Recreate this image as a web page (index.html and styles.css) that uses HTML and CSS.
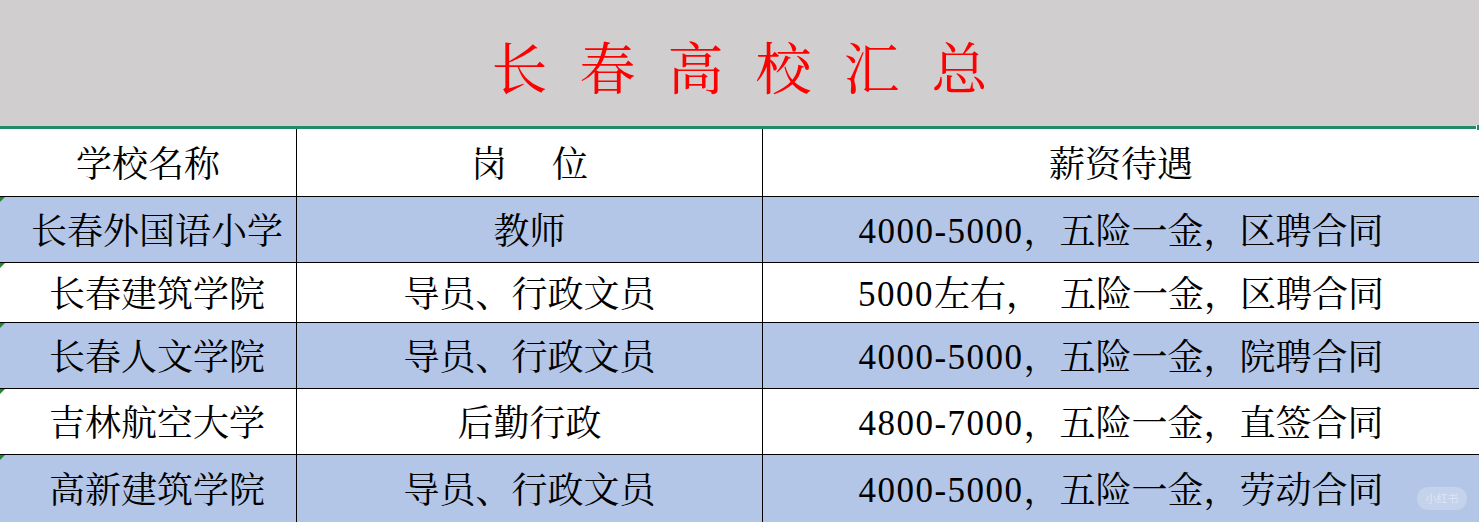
FILE: index.html
```html
<!DOCTYPE html>
<html lang="zh-CN">
<head>
<meta charset="utf-8">
<title>长春高校汇总</title>
<link rel="stylesheet" href="styles.css">
</head>
<body>
<div class="sheet">
  <div class="title-band">
    <h1 class="title">长春高校汇总</h1>
    <span class="handle"></span>
  </div>
  <div class="table">
    <div class="row head">
      <div class="cell c1">学校名称</div>
      <div class="cell c2">岗&nbsp;&nbsp;&nbsp;&nbsp;&nbsp;位</div>
      <div class="cell c3">薪资待遇</div>
    </div>
    <div class="row blue h66">
      <div class="cell c1 data">长春外国语小学</div>
      <div class="cell c2">教师</div>
      <div class="cell c3"><span class="num">4000-5000</span>，五险一金，区聘合同</div>
    </div>
    <div class="row h60">
      <div class="cell c1 data">长春建筑学院</div>
      <div class="cell c2">导员、行政文员</div>
      <div class="cell c3"><span class="num">5000</span>左右，&nbsp;&nbsp;五险一金，区聘合同</div>
    </div>
    <div class="row blue h66">
      <div class="cell c1 data">长春人文学院</div>
      <div class="cell c2">导员、行政文员</div>
      <div class="cell c3"><span class="num">4000-5000</span>，五险一金，院聘合同</div>
    </div>
    <div class="row h66">
      <div class="cell c1 data">吉林航空大学</div>
      <div class="cell c2">后勤行政</div>
      <div class="cell c3"><span class="num">4800-7000</span>，五险一金，直签合同</div>
    </div>
    <div class="row blue last">
      <div class="cell c1 data">高新建筑学院</div>
      <div class="cell c2">导员、行政文员</div>
      <div class="cell c3"><span class="num">4000-5000</span>，五险一金，劳动合同</div>
    </div>
  </div>
  <div class="watermark">小红书</div>
</div>
</body>
</html>
```

FILE: styles.css
```css
* { box-sizing: border-box; }
html, body { margin: 0; padding: 0; }
body {
  width: 1479px;
  height: 522px;
  overflow: hidden;
  background: #ffffff;
  font-family: "Noto Serif CJK SC", "Liberation Serif", "Noto Sans CJK SC", serif;
  color: #000;
}
.sheet { position: relative; width: 1479px; height: 522px; }

.title-band {
  position: relative;
  height: 129px;
  background: #d0cecf;
  border-bottom: 3px solid #1f8c67;
  display: flex;
  align-items: center;
  justify-content: center;
  padding-top: 4px;
}
.title {
  margin: 0;
  font-family: "Noto Serif CJK SC", "Noto Sans CJK SC", serif;
  font-weight: 400;
  font-size: 56px;
  line-height: 60px;
  color: #ff0000;
  letter-spacing: 32px;
  padding-left: 32px;
}
.handle {
  position: absolute;
  right: 0;
  bottom: -4px;
  width: 3px;
  height: 5px;
  background: #1f8c67;
  border-left: 1px solid #fff;
}

.table { display: flex; flex-direction: column; }
.row {
  display: grid;
  grid-template-columns: 297px 466px 1fr;
  height: 66px;
  border-bottom: 1px solid #000;
}
.row.head { height: 68px; }
.row.h60 { height: 60px; }
.row.last { height: 67px; border-bottom: none; }
.row.blue { background: #b4c6e7; }

.cell {
  position: relative;
  display: flex;
  align-items: center;
  justify-content: center;
  font-size: 36px;
  line-height: 40px;
  padding-top: 4px;
  white-space: nowrap;
  font-family: "Liberation Serif", "Noto Serif CJK SC", "Noto Sans CJK SC", serif;
}
.c1, .c2 { border-right: 1px solid #000; }
.c1.data { padding-left: 18px; }
.c1.data::before {
  content: "";
  position: absolute;
  left: 0;
  top: 0;
  width: 0;
  height: 0;
  border-top: 5px solid #1e8a2e;
  border-right: 5px solid transparent;
}
.num {
  font-family: "Liberation Serif", serif;
  font-size: 35px;
  letter-spacing: 1.5px;
}

.watermark {
  position: absolute;
  left: 1417px;
  top: 487px;
  width: 50px;
  height: 23px;
  border-radius: 12px;
  background: rgba(255, 255, 255, 0.22);
  color: rgba(255, 255, 255, 0.45);
  font-family: "Noto Sans CJK SC", sans-serif;
  font-size: 11px;
  line-height: 23px;
  text-align: center;
}
```
